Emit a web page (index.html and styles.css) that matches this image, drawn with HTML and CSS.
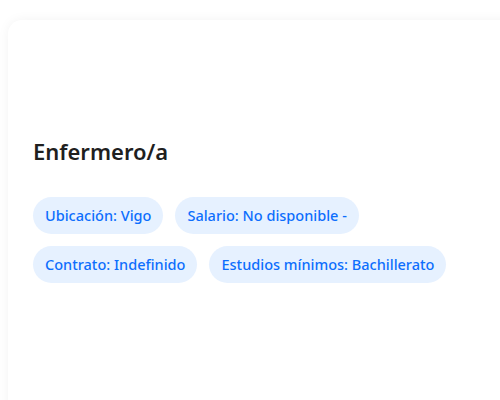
FILE: index.html
```html
<!DOCTYPE html>
<html lang="es">
<head>
<meta charset="utf-8">
<link rel="stylesheet" href="styles.css">
</head>
<body>
<div class="card">
  <h2 class="title">Enfermero/a</h2>
  <div class="tags">
    <span class="tag">Ubicación: Vigo</span>
    <span class="tag">Salario: No disponible -</span>
    <span class="tag">Contrato: Indefinido</span>
    <span class="tag">Estudios mínimos: Bachillerato</span>
  </div>
</div>
</body>
</html>
```
FILE: styles.css
```css
html {
  overflow: hidden;
}
html, body {
  margin: 0;
  background: #ffffff;
}
body {
  padding: 20px 0 0 8px;
  font-family: "Noto Sans", "Open Sans", sans-serif;
  overflow: hidden;
  height: 400px;
  box-sizing: border-box;
}
.card {
  background: #ffffff;
  border-radius: 14px;
  box-shadow: 0 0 12px rgba(0, 0, 0, 0.05);
  padding: 118px 25px 200px;
  width: 600px;
}
.title {
  margin: 0 0 33px;
  font-size: 22px;
  line-height: 26px;
  font-weight: 600;
  color: #1f1f1f;
}
.tags {
  display: flex;
  flex-wrap: wrap;
  gap: 12px;
  width: 420px;
}
.tag {
  background: #e6f1ff;
  color: #0d6efd;
  font-size: 14.5px;
  line-height: 21px;
  font-weight: 500;
  padding: 8px 12px;
  border-radius: 19px;
}
```
